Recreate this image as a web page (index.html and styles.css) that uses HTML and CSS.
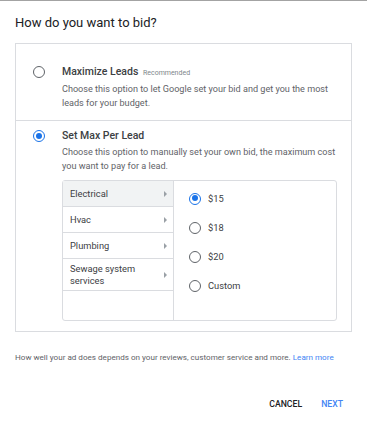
FILE: index.html
```html
<!DOCTYPE html>
<html lang="en">
<head>
    <meta charset="UTF-8">
    <title>How do you want to bid?</title>
    <link rel="stylesheet" href="styles.css">
</head>
<body>

<div class="dialog">
    <h1>How do you want to bid?</h1>

    <div class="options">
        <!-- Optie 1 -->
        <div class="option first">
            <span class="radio"></span>
            <div class="option-body">
                <div class="option-title">Maximize Leads <span class="tag">Recommended</span></div>
                <p class="option-desc">Choose this option to let Google set your bid and get you the most leads for your budget.</p>
            </div>
        </div>

        <!-- Optie 2 -->
        <div class="option second">
            <span class="radio checked"></span>
            <div class="option-body">
                <div class="option-title">Set Max Per Lead</div>
                <p class="option-desc">Choose this option to manually set your own bid, the maximum cost you want to pay for a lead.</p>

                <div class="picker">
                    <div class="categories">
                        <div class="cat active"><span>Electrical</span><i class="arrow"></i></div>
                        <div class="cat"><span>Hvac</span><i class="arrow"></i></div>
                        <div class="cat"><span>Plumbing</span><i class="arrow"></i></div>
                        <div class="cat tall"><span>Sewage system<br>services</span><i class="arrow"></i></div>
                    </div>
                    <div class="prices">
                        <div class="price"><span class="radio small checked"></span>$15</div>
                        <div class="price"><span class="radio small"></span>$18</div>
                        <div class="price"><span class="radio small"></span>$20</div>
                        <div class="price"><span class="radio small"></span>Custom</div>
                    </div>
                </div>
            </div>
        </div>
    </div>

    <p class="note">How well your ad does depends on your reviews, customer service and more. <a href="#">Learn more</a></p>

    <div class="actions">
        <button class="btn">CANCEL</button>
        <button class="btn primary">NEXT</button>
    </div>
</div>

</body>
</html>
```

FILE: styles.css
```css
body {
    margin: 0;
    font-family: Roboto, "Noto Sans", sans-serif;
    background: #fff;
    color: #3c4043;
}
.dialog {
    border-top: 1px solid #a3a3a3;
    width: 367px;
    padding: 0 15px 0 15px;
    box-sizing: border-box;
}
h1 {
    margin: 12px 0 0 0;
    font-size: 13px;
    font-weight: 400;
    line-height: 20px;
    color: #202124;
}
.options {
    margin-top: 10px;
    width: 337px;
    border: 1px solid #dadce0;
    box-sizing: border-box;
}
.option {
    display: flex;
}
.option.first {
    padding: 20px 0 10px 0;
    border-bottom: 1px solid #dadce0;
}
.option.second {
    padding: 7px 0 10px 0;
}
.radio {
    display: block;
    width: 12px;
    height: 12px;
    border: 1.5px solid #5f6368;
    border-radius: 50%;
    box-sizing: border-box;
    flex-shrink: 0;
    position: relative;
}
.option > .radio {
    margin: 2px 17px 0 17px;
}
.radio.checked {
    border-color: #1a73e8;
}
.radio.checked::after {
    content: "";
    position: absolute;
    left: 1.5px;
    top: 1.5px;
    width: 6px;
    height: 6px;
    border-radius: 50%;
    background: #1a73e8;
}
.option-title {
    font-size: 10.5px;
    font-weight: 500;
    line-height: 16px;
    color: #3c4043;
}
.tag {
    font-size: 7px;
    font-weight: 400;
    color: #80868b;
    margin-left: 2px;
}
.option-desc {
    margin: 1px 0 0 0;
    font-size: 9.1px;
    line-height: 14px;
    color: #5f6368;
    width: 280px;
}
.picker {
    display: flex;
    margin-top: 7px;
    width: 275px;
    height: 141px;
    border: 1px solid #dadce0;
    border-radius: 3px;
    box-sizing: border-box;
}
.categories {
    width: 110px;
    border-right: 1px solid #dadce0;
}
.cat {
    display: flex;
    align-items: center;
    justify-content: space-between;
    height: 25px;
    padding: 0 6px 0 7px;
    border-bottom: 1px solid #dadce0;
    font-size: 9.3px;
    line-height: 12px;
    color: #3c4043;
}
.cat.active {
    background: #f1f3f4;
}
.cat.tall {
    height: 31px;
}
.arrow {
    width: 0;
    height: 0;
    border-top: 3px solid transparent;
    border-bottom: 3px solid transparent;
    border-left: 3px solid #9aa0a6;
}
.prices {
    padding: 3px 0 0 15px;
}
.price {
    display: flex;
    align-items: center;
    height: 29px;
    font-size: 9.3px;
    color: #3c4043;
}
.price .radio {
    margin-right: 7px;
}
.note {
    margin: 20px 0 0 0;
    font-size: 8.1px;
    line-height: 10px;
    color: #5f6368;
    white-space: nowrap;
}
.note a {
    color: #4285f4;
    text-decoration: none;
}
.actions {
    display: flex;
    justify-content: flex-end;
    gap: 19px;
    margin-top: 37px;
    padding-right: 9px;
}
.btn {
    border: none;
    background: none;
    padding: 0;
    font-family: Roboto, sans-serif;
    font-size: 8.7px;
    font-weight: 500;
    color: #202124;
}
.btn.primary {
    color: #4285f4;
}
```
